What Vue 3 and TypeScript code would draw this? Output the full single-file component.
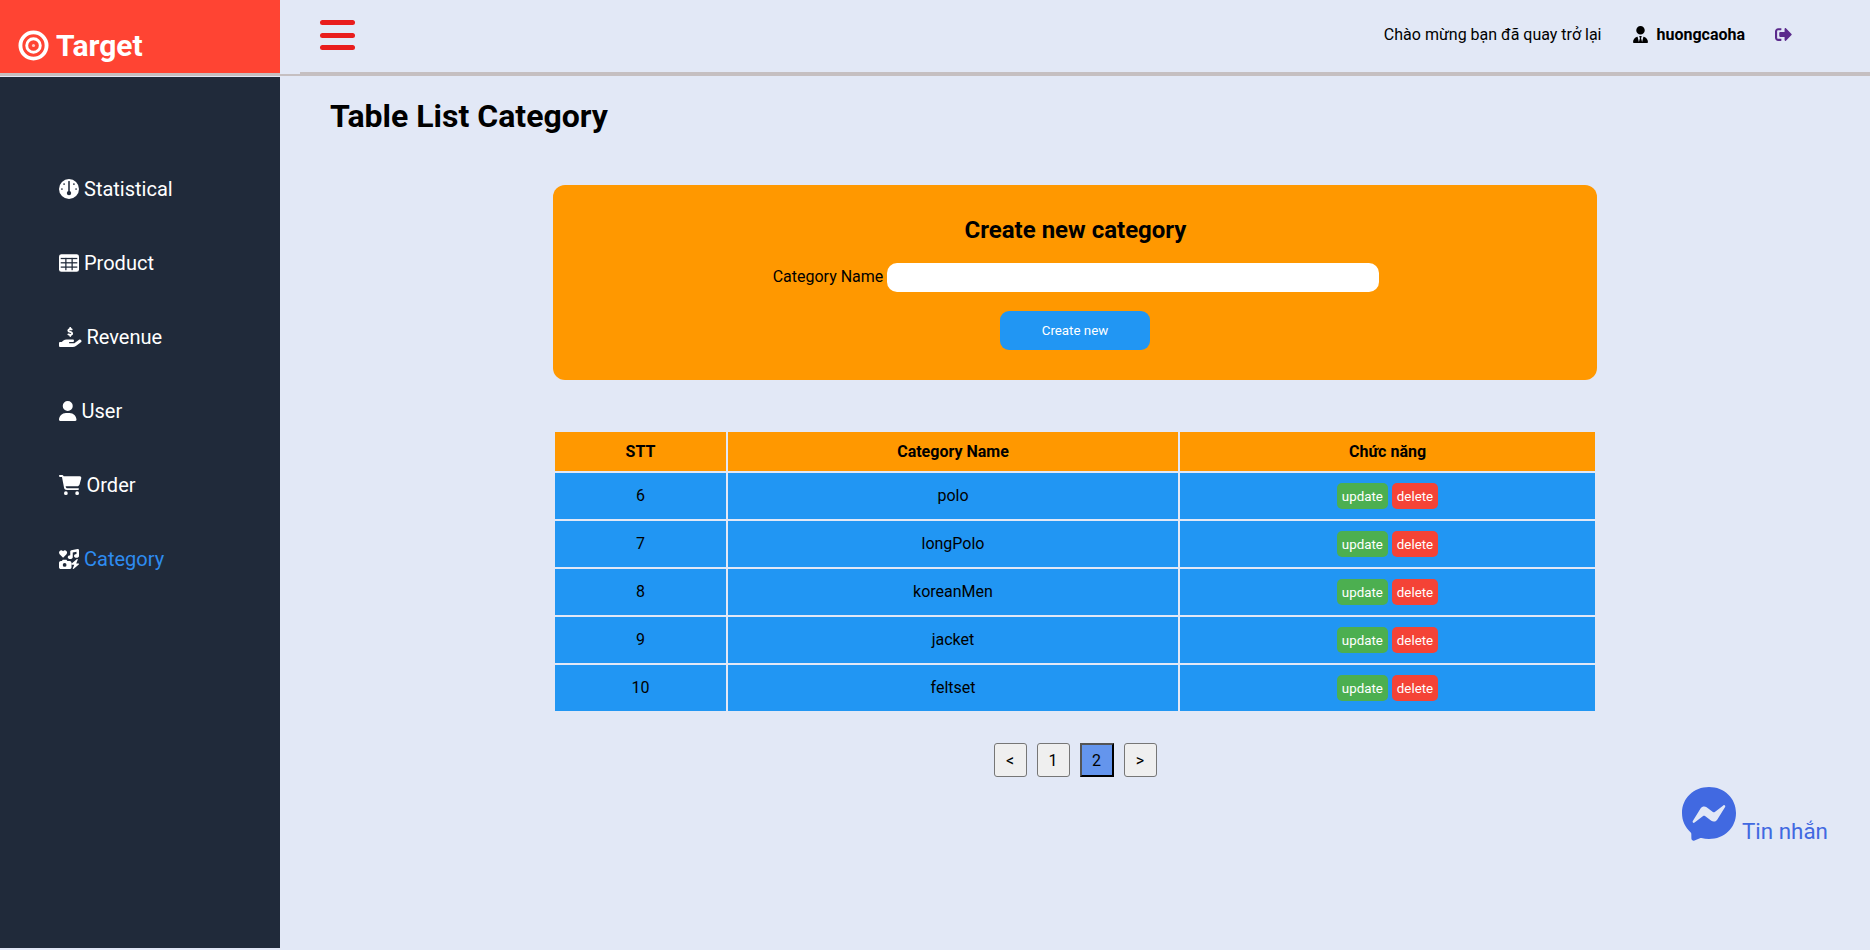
<script setup lang="ts">
interface Row { id: number; name: string }
const rows: Row[] = [
  { id: 6, name: 'polo' },
  { id: 7, name: 'longPolo' },
  { id: 8, name: 'koreanMen' },
  { id: 9, name: 'jacket' },
  { id: 10, name: 'feltset' },
]
</script>

<template>
  <div class="page">
    <aside class="sidebar">
      <div class="brand">
        <svg class="brand-icon" viewBox="0 0 32 32">
          <circle cx="16" cy="16" r="13.5" fill="none" stroke="#fff" stroke-width="4" />
          <circle cx="16" cy="16" r="7" fill="none" stroke="#fff" stroke-width="3" />
          <circle cx="16" cy="16" r="1.6" fill="#fff" fill-opacity="0.7" />
        </svg>
        <span>Target</span>
      </div>
      <nav class="menu">
        <a class="item">
          <svg class="ic" viewBox="0 0 512 512"><circle cx="256" cy="256" r="256" fill="#fff" /><g fill="#202a3a"><circle cx="130" cy="130" r="22" /><circle cx="382" cy="130" r="22" /><circle cx="75" cy="256" r="22" /><circle cx="437" cy="256" r="22" /><rect x="236" y="50" width="40" height="280" rx="16" /><circle cx="256" cy="360" r="56" /></g></svg>
          <span>Statistical</span>
        </a>
        <a class="item">
          <svg class="ic" viewBox="0 0 512 512"><rect y="32" width="512" height="448" rx="60" fill="#fff" /><g fill="#202a3a"><rect x="160" y="125" width="32" height="315" /><rect x="320" y="125" width="32" height="315" /><rect x="44" y="125" width="424" height="32" /><rect x="44" y="235" width="424" height="32" /><rect x="44" y="345" width="424" height="32" /></g></svg>
          <span>Product</span>
        </a>
        <a class="item">
          <svg class="ic wide" viewBox="0 0 576 512"><path fill="#fff" d="M312 24V34.5c6.4 1.2 12.6 2.7 18.2 4.2c12.8 3.4 20.4 16.6 17 29.4s-16.6 20.4-29.4 17c-10.9-2.9-21.1-4.9-30.2-5c-7.3-.1-14.7 1.7-19.4 4.4c-2.1 1.3-3.1 2.4-3.5 3c-.3 .5-.7 1.2-.7 2.8c0 .3 0 .5 0 .6c.2 .2 .9 1.2 3.3 2.6c5.8 3.5 14.4 6.2 27.4 10.1l.9 .3c11.1 3.3 25.9 7.8 37.9 15.3c13.7 8.6 26.1 22.9 26.4 44.9c.3 22.5-11.4 38.9-26.7 48.5c-6.7 4.1-13.9 7-21.1 8.8V232c0 13.3-10.7 24-24 24s-24-10.7-24-24V220.6c-9.5-2.3-18.2-5.3-25.6-7.8c-2.1-.7-4.1-1.4-6-2c-12.6-4.2-19.4-17.8-15.2-30.4s17.8-19.4 30.4-15.2c2.6 .9 5 1.7 7.3 2.5c13.6 4.6 23.4 7.9 33.9 8.3c8 .3 15.1-1.6 19.2-4.1c1.9-1.2 2.8-2.2 3.2-2.9c.4-.6 .9-1.8 .8-4.1l0-.2c0-1 0-2.1-4-4.6c-5.7-3.6-14.3-6.4-27.1-10.3l-1.9-.6c-10.8-3.2-25-7.5-36.4-14.4c-13.5-8.1-26.5-22-26.6-44.1c-.1-22.9 12.9-38.6 27.7-47.4c6.4-3.8 13.3-6.4 20.2-8.2V24c0-13.3 10.7-24 24-24s24 10.7 24 24zM568.2 336.3c13.1 17.8 9.3 42.8-8.5 55.9L433.1 485.5c-23.4 17.2-51.6 26.5-80.7 26.5H192 32c-17.7 0-32-14.3-32-32V416c0-17.7 14.3-32 32-32H68.8l44.9-36c22.7-18.2 50.9-28 80-28H272h16 64c17.7 0 32 14.3 32 32s-14.3 32-32 32H288 272c-8.8 0-16 7.2-16 16s7.2 16 16 16H392.6l119.7-88.2c17.8-13.1 42.8-9.3 55.9 8.5z" /></svg>
          <span>Revenue</span>
        </a>
        <a class="item">
          <svg class="ic user" viewBox="0 0 448 512"><path fill="#fff" d="M224 256A128 128 0 1 0 224 0a128 128 0 1 0 0 256zm-45.7 48C79.8 304 0 383.8 0 482.3C0 498.7 13.3 512 29.7 512H418.3c16.4 0 29.7-13.3 29.7-29.7C448 383.8 368.2 304 269.7 304H178.3z" /></svg>
          <span>User</span>
        </a>
        <a class="item">
          <svg class="ic wide" viewBox="0 0 576 512"><path fill="#fff" d="M0 24C0 10.7 10.7 0 24 0H69.5c22 0 41.5 12.8 50.6 32h411c26.3 0 45.5 25 38.6 50.4l-41 152.3c-8.5 31.4-37 53.3-69.5 53.3H170.7l5.4 28.5c2.2 11.3 12.1 19.5 23.6 19.5H488c13.3 0 24 10.7 24 24s-10.7 24-24 24H199.7c-34.6 0-64.3-24.6-70.7-58.5L77.4 54.5c-.7-3.8-4-6.5-7.9-6.5H24C10.7 48 0 37.3 0 24zM128 464a48 48 0 1 1 96 0 48 48 0 1 1 -96 0zm336-48a48 48 0 1 1 0 96 48 48 0 1 1 0-96z" /></svg>
          <span>Order</span>
        </a>
        <a class="item active">
          <svg class="ic" viewBox="0 0 512 512"><path fill="#fff" d="M500.3 7.3C507.7 13.3 512 22.4 512 32V176c0 26.5-28.7 48-64 48s-64-21.5-64-48s28.700-48 64-48V71L352 90.200V208c0 26.500-28.700 48-64 48s-64-21.500-64-48s28.700-48 64-48V64c0-15.300 10.800-28.400 25.700-31.400l160-32c9.400-1.900 19.100 .6 26.600 6.600zM74.700 304l11.800-17.700c4.500-6.700 11.900-10.700 20-10.700h74.300c8 0 15.500 4 20 10.700L212.600 304H272c26.500 0 48 21.500 48 48V464c0 26.500-21.500 48-48 48H48c-26.500 0-48-21.500-48-48V352c0-26.500 21.500-48 48-48H74.700zM192 408a48 48 0 1 0 -96 0 48 48 0 1 0 96 0zM478.700 278.300L440.300 368H496c6.700 0 12.600 4.100 15 10.400s.6 13.300-4.400 17.700l-128 112c-5.600 4.900-13.900 5.300-19.900 .9s-8.200-12.400-5.300-19.200L391.700 400H336c-6.700 0-12.600-4.100-15-10.400s-.6-13.300 4.400-17.700l128-112c5.600-4.900 13.900-5.300 19.900-.9s8.200 12.400 5.300 19.200zM104 224L16 132C-6 108 -4 70 20 48C44 26 80 30 104 56C128 30 164 26 188 48C212 70 214 108 192 132Z" /></svg>
          <span>Category</span>
        </a>
      </nav>
    </aside>

    <div class="main">
      <header class="topbar">
        <div class="burger"><i></i><i></i><i></i></div>
        <div class="top-right">
          <span class="welcome">Chào mừng bạn đã quay trở lại</span>
          <svg class="tie" viewBox="0 0 448 512"><path d="M96 128a128 128 0 1 0 256 0A128 128 0 1 0 96 128zm94.500 200.200l18.600 31L175.800 483.100l-36-146.900c-2-8.100-9.800-13.400-17.900-11.300C51.900 342.400 0 405.800 0 481.300c0 17 13.800 30.700 30.700 30.700H162.500c0 0 0 0 .1 0H168 280h5.500c0 0 0 0 .1 0H417.300c17 0 30.700-13.800 30.700-30.700c0-75.500-51.900-138.900-121.900-156.400c-8.100-2-15.900 3.300-17.900 11.300l-36 146.900L238.900 359.200l18.600-31c6.400-10.700-1.300-24.200-13.700-24.200H224 204.300c-12.400 0-20.100 13.600-13.700 24.200z" /></svg>
          <span class="username">huongcaoha</span>
          <svg class="logout" viewBox="0 0 512 512"><path fill="#5b2a8c" d="M497 273L329 441c-15 15-41 4.500-41-17v-96H152c-13.300 0-24-10.700-24-24v-96c0-13.300 10.700-24 24-24h136V88c0-21.400 25.900-32 41-17l168 168c9.300 9.300 9.300 24.500 0 33.900zM192 436v-40c0-6.600-5.400-12-12-12H96c-17.700 0-32-14.300-32-32V160c0-17.700 14.300-32 32-32h84c6.600 0 12-5.400 12-12V76c0-6.600-5.400-12-12-12H96c-53 0-96 43-96 96v192c0 53 43 96 96 96h84c6.600 0 12-5.400 12-12z" /></svg>
        </div>
      </header>

      <section class="content">
        <h1 class="title">Table List Category</h1>

        <div class="wrap">
          <form class="card" @submit.prevent>
            <h2 class="card-title">Create new category</h2>
            <div class="field">
              <label>Category Name</label>
              <input type="text" />
            </div>
            <button class="create" type="button">Create new</button>
          </form>

          <table class="grid">
            <colgroup>
              <col class="c1" />
              <col class="c2" />
              <col class="c3" />
            </colgroup>
            <thead>
              <tr>
                <th>STT</th>
                <th>Category Name</th>
                <th>Chức năng</th>
              </tr>
            </thead>
            <tbody>
              <tr v-for="row in rows" :key="row.id">
                <td>{{ row.id }}</td>
                <td>{{ row.name }}</td>
                <td class="actions">
                  <button class="act up" type="button">update</button>
                  <button class="act del" type="button">delete</button>
                </td>
              </tr>
            </tbody>
          </table>

          <div class="pager">
            <button class="pg" type="button">&lt;</button>
            <button class="pg" type="button">1</button>
            <button class="pg on" type="button">2</button>
            <button class="pg" type="button">&gt;</button>
          </div>
        </div>
      </section>
    </div>

    <div class="chat">
      <svg class="chat-ic" viewBox="0 0 56 58">
        <path fill="#4169e1" d="M28 1C12.800 1 1 12.100 1 27C1 34.800 4.200 41.500 9.500 46.200C10 46.600 10.200 47.200 10.300 47.800L10.400 52.600C10.500 54.200 12 55.200 13.500 54.600L18.900 52.200C19.400 52 19.900 51.900 20.400 52.100C22.800 52.700 25.400 53 28 53C43.200 53 55 41.900 55 27C55 12.100 43.200 1 28 1Z" />
        <path fill="#e2e8f6" d="M11.800 34.900L19.700 22.300C21 20.300 23.700 19.800 25.600 21.200L31.900 25.900C32.500 26.300 33.300 26.300 33.800 25.900L42.300 19.400C43.400 18.500 44.900 19.900 44.100 21.100L36.200 33.700C34.900 35.700 32.200 36.200 30.300 34.800L24 30.100C23.400 29.700 22.600 29.700 22.100 30.100L13.600 36.600C12.500 37.500 11 36.100 11.800 34.900Z" />
      </svg>
      <span>Tin nhắn</span>
    </div>
  </div>
</template>

<style>
html, body { margin: 0; background: #e2e8f6; }
</style>

<style scoped>
.page {
  display: flex;
  width: 1870px;
  height: 948px;
  background: #e2e8f6;
  font-family: Roboto, "Liberation Sans", sans-serif;
  color: #000;
  overflow: hidden;
  position: relative;
}
.sidebar {
  width: 280px;
  flex: none;
  background: #202a3a;
  display: flex;
  flex-direction: column;
}
.brand {
  height: 73px;
  box-sizing: border-box;
  background: #ff4433;
  box-shadow: 0 3px 0 #c5bfc1, 0 4px 0 #e2e8f6;
  display: flex;
  align-items: center;
  padding: 18px 0 0 18px;
  gap: 7px;
  color: #fff;
  font-size: 30px;
  font-weight: 700;
}
.brand-icon { width: 31px; height: 31px; flex: none; margin-top: -1px; }
.menu {
  display: flex;
  flex-direction: column;
  padding-top: 79px;
}
.item {
  height: 74px;
  display: flex;
  align-items: center;
  gap: 5px;
  padding-left: 59px;
  color: #fff;
  font-size: 20px;
}
.item.active { color: #2e8cf0; }
.ic { width: 20px; height: 20px; flex: none; }
.ic.wide { width: 22.5px; }
.ic.user { width: 17.5px; }
.main {
  flex: 1;
  min-width: 0;
  display: flex;
  flex-direction: column;
}
.topbar {
  height: 74px;
  position: relative;
  border-bottom: 2px solid #c5bfc1;
  display: flex;
  align-items: center;
  justify-content: space-between;
  padding: 0 78px 0 40px;
}
.topbar::after {
  content: "";
  position: absolute;
  left: 20px;
  right: 0;
  top: 72px;
  height: 2px;
  background: #c5bfc1;
}
.burger {
  width: 35px;
  display: flex;
  flex-direction: column;
  gap: 7.5px;
  margin-top: -4px;
}
.burger i {
  display: block;
  height: 5px;
  border-radius: 3px;
  background: #e91c1c;
}
.top-right {
  display: flex;
  align-items: center;
  font-size: 16px;
  margin-top: -6px;
}
.welcome { margin-right: 32px; }
.tie { width: 15px; height: 17px; margin-right: 8px; }
.username { font-weight: 700; margin-right: 30px; }
.logout { width: 17px; height: 17px; }
.content {
  padding: 0 50px;
}
.title {
  margin: 18px 0 0;
  font-size: 32px;
  line-height: 44px;
  font-weight: 700;
}
.wrap {
  width: 1044px;
  margin: 47px auto 0;
}
.card {
  background: #ff9800;
  border-radius: 12px;
  height: 195px;
  box-sizing: border-box;
  padding-top: 30px;
  display: flex;
  flex-direction: column;
  align-items: center;
}
.card-title {
  margin: 0 0 0 1px;
  font-size: 24px;
  line-height: 30px;
  font-weight: 700;
}
.field {
  margin: 18px 0 0 2px;
  display: flex;
  align-items: center;
  gap: 4px;
  font-size: 16px;
}
.field label { margin-top: -2px; }
.field input {
  width: 492px;
  height: 29px;
  box-sizing: border-box;
  border: 0;
  border-radius: 10px;
  background: #fff;
  outline: none;
}
.create {
  width: 150px;
  height: 39px;
  margin-top: 19px;
  border: 0;
  border-radius: 9px;
  background: #2196f3;
  color: #fff;
  font: 400 13.333px Roboto, sans-serif;
}
.grid {
  width: 1044px;
  margin-top: 50px;
  table-layout: fixed;
  border-collapse: separate;
  border-spacing: 2px;
  text-align: center;
  font-size: 16px;
}
.c1 { width: 171px; }
.c2 { width: 450px; }
.c3 { width: 415px; }
.grid th {
  box-sizing: border-box;
  height: 39px;
  padding: 0 0 1px;
  background: #ff9800;
  font-weight: 700;
}
.grid td {
  box-sizing: border-box;
  height: 46px;
  padding: 0 0 2px;
  background: #2196f3;
}
.grid td.actions { padding: 0; }
.act {
  height: 26px;
  padding: 0 5px;
  margin: 0 2px;
  border: 0;
  border-radius: 5px;
  color: #fff;
  font: 400 13.333px Roboto, sans-serif;
  vertical-align: middle;
}
.up { background: #4caf50; }
.del { background: #f44336; }
.pager {
  display: flex;
  justify-content: center;
  align-items: flex-start;
  gap: 10px;
  margin-top: 30px;
}
.pg {
  width: 33px;
  height: 34px;
  padding: 0;
  box-sizing: border-box;
  border: 1px solid #767676;
  border-radius: 3px;
  background: #efefef;
  color: #000;
  font: 400 16px Roboto, sans-serif;
}
.pg.on {
  width: 34px;
  background: #6495ed;
  border: 2px outset #000;
  border-radius: 0;
}
.chat {
  position: absolute;
  left: 1681px;
  top: 786px;
  display: flex;
  align-items: flex-end;
  gap: 5px;
  color: #4169e1;
  font-size: 22.4px;
}
.chat-ic { width: 56px; height: 58px; margin-bottom: -1px; }
.chat span { line-height: 28px; margin-bottom: -2px; }
</style>
